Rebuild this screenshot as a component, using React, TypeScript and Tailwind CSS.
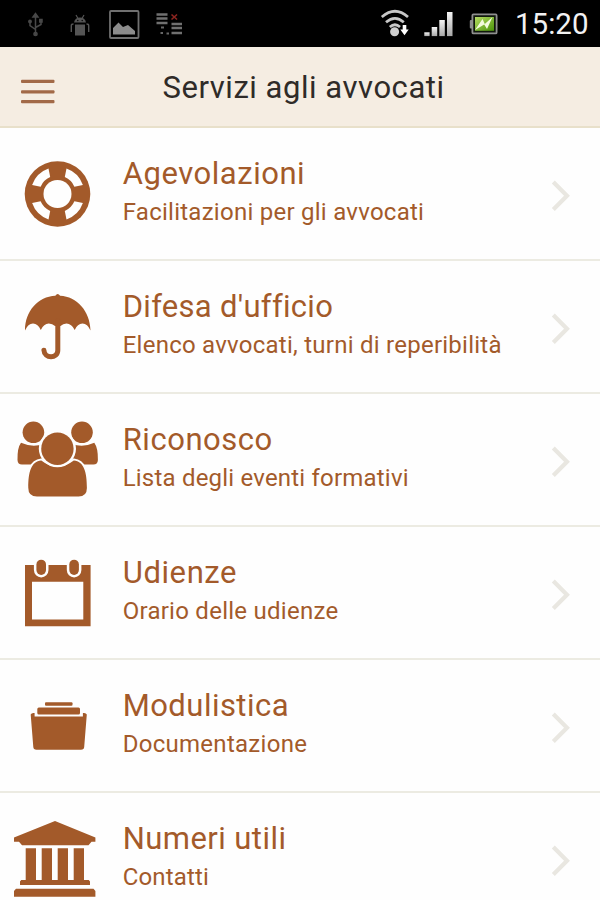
import type { ReactNode } from "react";

interface Service {
  title: string;
  subtitle: string;
  titleClass: string;
  subtitleClass: string;
  icon: ReactNode;
}

const LifebuoyIcon = () => (
  <g transform="translate(57.5 66)">
    <circle r="32.8" />
    <circle r="14" fill="#fefefe" />
    {[0, 90, 180, 270].map((angle) => (
      <path
        key={angle}
        transform={`rotate(${angle})`}
        fill="#fefefe"
        d="M-9-25.4A27 27 0 0 0-25.4-9L-16.9-7.3A18.4 18.4 0 0 1-7.3-16.9Z"
      />
    ))}
  </g>
);

const UmbrellaIcon = () => (
  <>
    <path d="M25 69.5C25 50 38 35.7 55.3 34.8Q57.7 31.2 60.1 34.8C77 35.7 90 50 90.5 69.5Q87.5 62.5 82.5 62.5Q77.5 62.5 74.7 69Q71.5 62.5 66.5 62.5Q63 62.5 60.5 65H55Q52.5 62.5 48.8 62.5Q43.8 62.5 40.8 69Q38 62.5 33 62.5Q28 62.5 25 69.5Z" />
    <path
      d="M57.8 60V89.3C57.8 98 44.3 98 43.9 89.2"
      fill="none"
      stroke="#a35a2a"
      strokeWidth="5"
      strokeLinecap="round"
    />
  </>
);

const PeopleIcon = () => (
  <>
    <circle cx="33.4" cy="38.3" r="10.8" />
    <circle cx="82" cy="38.3" r="10.8" />
    <path d="M21 48.8Q33 54 43 50V70.5H22Q17.7 70.5 17.5 66Q17.2 54 21 48.8Z" />
    <path d="M94.3 48.8Q83 54 72 50V70.5H93.4Q97.7 70.5 97.9 66Q98.1 54 94.3 48.8Z" />
    <path
      d="M41.3 66.5Q57.4 79 73.8 66.5C84 67.5 86.9 78 86.9 94Q86.9 102.5 78.5 102.5H37Q28.3 102.5 28.3 94C28.3 78 31 67.5 41.3 66.5Z"
      stroke="#fefefe"
      strokeWidth="4"
      paintOrder="stroke"
    />
    <circle cx="57.4" cy="54.7" r="18.6" fill="#fefefe" />
    <circle cx="57.4" cy="54.7" r="16.2" />
  </>
);

const CalendarIcon = () => (
  <>
    <path fillRule="evenodd" d="M25 38H90.6V99.3H25ZM32 54.8V92.4H83.3V54.8Z" />
    <g stroke="#fefefe" strokeWidth="5" paintOrder="stroke">
      <rect x="36.4" y="32.7" width="9.6" height="15.2" rx="4.8" />
      <rect x="69.3" y="32.7" width="9.6" height="15.2" rx="4.8" />
    </g>
  </>
);

const FolderIcon = () => (
  <>
    <rect x="45" y="42.2" width="27.5" height="3.6" rx="1" />
    <rect x="37.3" y="47.6" width="42.7" height="6.9" rx="1.5" />
    <path d="M30.7 54.5Q31.5 52.6 34.6 53.1V56.6H82.9V53.1Q86 52.6 86.8 54.5L84.2 87Q84 89.8 81 89.8H36.4Q33.5 89.8 33.3 87Z" />
  </>
);

const TempleIcon = () => (
  <>
    <path d="M55 28L95.4 44.5V48.7H91.5L88.5 52.2H22L19 48.7H14V44.5Z" />
    <path d="M25.7 55.3H36V87H41.7V55.3H52V87H57.7V55.3H68V87H73.7V55.3H84V87H88.8L90 88.5V92H20V88.5L21.2 87H25.7Z" />
    <path d="M16 95.7H93.5L95.4 98V103.7H14V98Z" />
  </>
);

const SERVICES: Service[] = [
  {
    title: "Agevolazioni",
    subtitle: "Facilitazioni per gli avvocati",
    titleClass: "tracking-[0.54px]",
    subtitleClass: "tracking-[0.26px]",
    icon: <LifebuoyIcon />,
  },
  {
    title: "Difesa d'ufficio",
    subtitle: "Elenco avvocati, turni di reperibilità",
    titleClass: "tracking-[0.29px]",
    subtitleClass: "tracking-[0.25px]",
    icon: <UmbrellaIcon />,
  },
  {
    title: "Riconosco",
    subtitle: "Lista degli eventi formativi",
    titleClass: "tracking-[0.54px]",
    subtitleClass: "tracking-[0.2px]",
    icon: <PeopleIcon />,
  },
  {
    title: "Udienze",
    subtitle: "Orario delle udienze",
    titleClass: "tracking-[0.6px]",
    subtitleClass: "tracking-[0.26px]",
    icon: <CalendarIcon />,
  },
  {
    title: "Modulistica",
    subtitle: "Documentazione",
    titleClass: "tracking-[0.47px]",
    subtitleClass: "tracking-[0.28px]",
    icon: <FolderIcon />,
  },
  {
    title: "Numeri utili",
    subtitle: "Contatti",
    titleClass: "tracking-[0.44px]",
    subtitleClass: "tracking-[0.15px]",
    icon: <TempleIcon />,
  },
];

function NotificationIcons() {
  return (
    <svg width="200" height="47" viewBox="0 0 200 47" className="shrink-0">
      {/* usb */}
      <g fill="none" stroke="#484848" strokeWidth="1.5">
        <path d="M35.5 15V34M30 22V25.5L35.5 29.5M41 20V24.5L35.5 27.5" />
        <circle cx="35.5" cy="34" r="1.6" fill="#484848" />
        <circle cx="30" cy="21.5" r="1.2" fill="#484848" />
        <path d="M33 17L35.5 13.5L38 17ZM39.8 19.5H42V22H39.8Z" fill="#484848" />
      </g>
      {/* android debug */}
      <g fill="#555">
        <path d="M74 22.5Q75 17.5 80 17.5Q85 17.5 86 22.5Z" />
        <path d="M76 15L78 18.5M84 15L82 18.5" stroke="#555" strokeWidth="1.2" />
        <path d="M75 24.5H85V35.5H75Z" />
        <path
          d="M73.5 24Q71.3 24 71.3 25.5V32M86.5 24Q88.7 24 88.7 25.5V32"
          fill="none"
          stroke="#555"
          strokeWidth="1.4"
        />
        <circle cx="77.8" cy="20.5" r="0.7" fill="#000" />
        <circle cx="82.2" cy="20.5" r="0.7" fill="#000" />
      </g>
      {/* screenshot saved */}
      <rect
        x="110"
        y="11"
        width="28.5"
        height="27"
        rx="1"
        fill="none"
        stroke="#707070"
        strokeWidth="1.8"
      />
      <path
        d="M113 34.5V28L118.5 22.5L123 27L128 25L135 31V34.5Z"
        fill="#8c8c8c"
      />
      {/* sync lost */}
      <path
        d="M156.5 14.5H167.5M156.5 18.5H167.5M156.5 23H167.5M171.5 24H182M171.5 28H182M171.5 33H182"
        stroke="#707070"
        strokeWidth="2.6"
      />
      <path d="M171.5 14.5L177 19.5M177 14.5L171.5 19.5" stroke="#8c2520" strokeWidth="1.6" />
      <path
        d="M161 27.5H164M160.5 33H163M166.5 33.5H169"
        stroke="#666"
        strokeWidth="2"
      />
    </svg>
  );
}

function SystemIcons() {
  return (
    <svg width="130" height="47" viewBox="376 0 130 47" className="shrink-0">
      <defs>
        <linearGradient id="silver" x1="0" y1="0" x2="0" y2="1">
          <stop offset="0" stopColor="#f4f4f4" />
          <stop offset="1" stopColor="#a8a8a8" />
        </linearGradient>
        <linearGradient id="charge" x1="0" y1="0" x2="1" y2="1">
          <stop offset="0" stopColor="#b6dc63" />
          <stop offset="1" stopColor="#4b9409" />
        </linearGradient>
      </defs>
      <g fill="none" stroke="#c8c8c8" strokeWidth="2.7">
        <path d="M381.8 17Q395 5.5 408 17" />
        <path d="M386 22.3Q395 14.5 403.8 22.3" />
        <path d="M389.8 27Q395 22.5 400 27" />
      </g>
      <circle cx="394.6" cy="31.7" r="4.5" fill="#d0d0d0" />
      <path
        d="M402.7 25H406.3V29.5H408.7L404.5 35.2L400.3 29.5H402.7Z"
        fill="#fff"
        stroke="#000"
        strokeWidth="1.5"
        paintOrder="stroke"
      />
      <g fill="url(#silver)">
        <rect x="424.3" y="32.3" width="5.3" height="3.8" />
        <rect x="431.7" y="27" width="5.5" height="9.1" />
        <rect x="439.3" y="20" width="5.5" height="16.1" />
        <rect x="447" y="12" width="5.5" height="24.1" />
      </g>
      <rect x="469.8" y="20" width="3" height="8.5" rx="1" fill="#8c8c8c" />
      <rect
        x="472.4"
        y="14.4"
        width="24.2"
        height="19"
        rx="1"
        fill="#10180c"
        stroke="#8f8f8f"
        strokeWidth="1.8"
      />
      <rect x="475" y="17" width="19" height="13.8" fill="url(#charge)" />
      <path d="M475 30L482.5 19L484.8 24L492.5 17L487 29L484.2 24.5Z" fill="#f3fbdc" />
    </svg>
  );
}

function StatusBar() {
  return (
    <div className="flex h-[47px] shrink-0 items-start bg-black">
      <NotificationIcons />
      <div className="grow" />
      <SystemIcons />
      <div className="w-[94px] pl-[9px] pt-[6px] text-[29.5px] leading-[36px] whitespace-nowrap text-[#f2f2f2]">
        15:20
      </div>
    </div>
  );
}

function Header() {
  return (
    <header className="flex h-[81px] shrink-0 items-start border-b-2 border-[#e8e0ca] bg-[#f5ede2]">
      <button type="button" aria-label="Menu" className="pt-[32px] pl-[21px]">
        <svg width="34" height="25" viewBox="0 0 34 25" fill="#a26a48">
          <rect y="0.8" width="33.5" height="3.2" rx="1" />
          <rect y="11.3" width="33.5" height="3.2" rx="1" />
          <rect y="21" width="33.5" height="3.2" rx="1" />
        </svg>
      </button>
      <h1 className="pt-[21px] pl-[107.5px] text-[31px] leading-[40px] tracking-[0.54px] whitespace-nowrap text-[#2f2b28]">
        Servizi agli avvocati
      </h1>
    </header>
  );
}

function ServiceRow({ service }: { service: Service }) {
  return (
    <li className="flex h-[133px] shrink-0 border-b-2 border-[#ecebe2] text-[#a35a2a]">
      <svg width="115" height="131" viewBox="0 0 115 131" fill="#a35a2a" className="shrink-0">
        {service.icon}
      </svg>
      <div className="grow pt-[26px] pl-[7.7px] whitespace-nowrap">
        <h2 className={`text-[31px] leading-[40px] ${service.titleClass}`}>{service.title}</h2>
        <p className={`text-[24px] leading-[36px] ${service.subtitleClass}`}>
          {service.subtitle}
        </p>
      </div>
      <svg width="50" height="131" viewBox="550 0 50 131" className="shrink-0">
        <path
          d="M553.3 54L567 67.8L553.3 81.6"
          fill="none"
          stroke="#e9e7e1"
          strokeWidth="4.2"
        />
      </svg>
    </li>
  );
}

export default function App() {
  return (
    <div className="flex h-[900px] w-[600px] flex-col overflow-hidden bg-[#fefefe] font-[Roboto,sans-serif]">
      <StatusBar />
      <Header />
      <ul className="flex flex-col">
        {SERVICES.map((service) => (
          <ServiceRow key={service.title} service={service} />
        ))}
      </ul>
    </div>
  );
}
